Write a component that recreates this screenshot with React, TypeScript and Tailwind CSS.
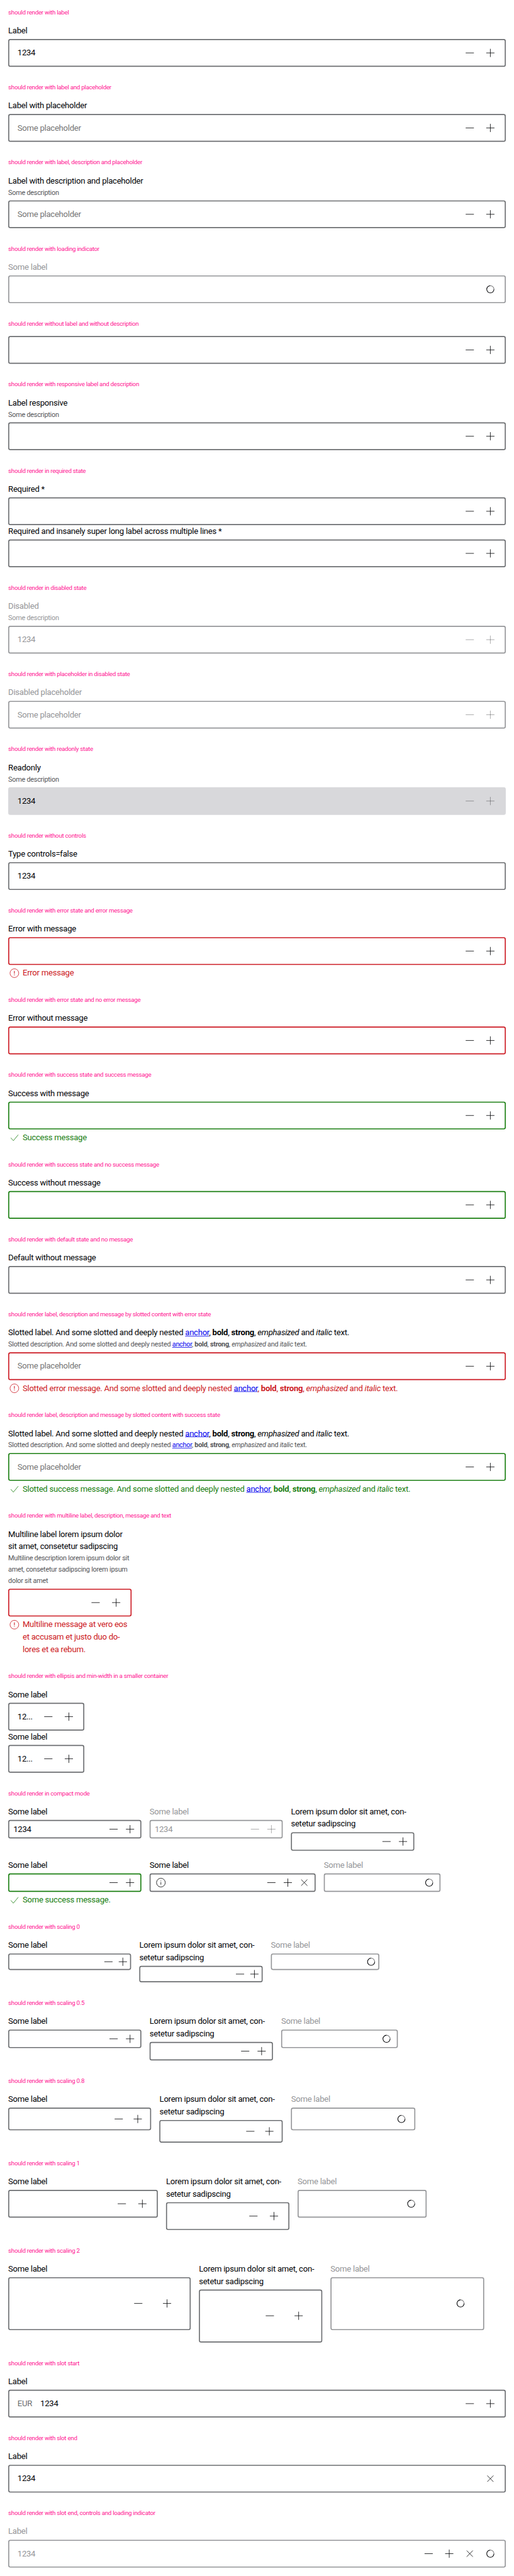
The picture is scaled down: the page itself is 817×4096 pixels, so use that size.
import { type ReactNode } from 'react';

type State = 'none' | 'error' | 'success';
type Icon = 'minus' | 'plus' | 'close' | 'spinner' | 'info';

const shapes: Record<Icon, ReactNode> = {
  minus: <path d="M4 12h16" />,
  plus: <path d="M4 12h16M12 4v16" />,
  close: <path d="M6 6l12 12M18 6L6 18" />,
  spinner: (
    <>
      <path d="M12 5a7 7 0 1 0 7 7" strokeWidth="1.3" />
      <path d="M12 5a7 7 0 0 1 7 7" strokeWidth="1.3" strokeOpacity="0.5" />
    </>
  ),
  info: (
    <>
      <circle cx="12" cy="12" r="8.5" />
      <path d="M12 11v5M12 8v1.2" />
    </>
  ),
};

function Glyph({ name, muted }: { name: Icon; muted?: boolean }) {
  return (
    <svg viewBox="0 0 24 24" className={`size-6 shrink-0 ${muted ? 'text-[#010205]/40' : 'text-[#010205]'}`} fill="none" stroke="currentColor" strokeWidth="1">
      {shapes[name]}
    </svg>
  );
}

const sizes = {
  s0: 'h-8 px-0.5 gap-1',
  s05: 'h-9 px-2 gap-2',
  s08: 'h-[43.6px] px-[12.8px] gap-[12.4px]',
  s1: 'h-[54px] px-4 gap-4',
  s2: 'h-[103.4px] px-8 gap-8',
};

interface FieldProps {
  label?: ReactNode;
  description?: ReactNode;
  message?: ReactNode;
  state?: State;
  value?: string;
  placeholder?: string;
  disabled?: boolean;
  readOnly?: boolean;
  start?: ReactNode;
  end?: Icon[];
  endMuted?: boolean;
  size?: keyof typeof sizes;
  className?: string;
}

function Field({ label, description, message, state = 'none', value, placeholder, disabled, readOnly, start, end = ['minus', 'plus'], endMuted, size = 's1', className = 'w-full' }: FieldProps) {
  const border = readOnly
    ? 'border-[#d8d8db] bg-[#d8d8db]'
    : state === 'error'
      ? 'border-[#cc1922]'
      : state === 'success'
        ? 'border-[#197e10]'
        : disabled
          ? 'border-[#949598]'
          : 'border-[#6b6d70]';
  const text = disabled ? 'text-[#949598]' : 'text-[#010205]';
  return (
    <div className={className}>
      {label && <div className={`text-base leading-6 tracking-[-0.3px] whitespace-nowrap ${text}`}>{label}</div>}
      {description && (
        <div className={`text-[13.3px] leading-[22px] tracking-[-0.31px] whitespace-nowrap ${disabled ? 'text-[#949598]' : 'text-[#535457]'}`}>{description}</div>
      )}
      <div className={`flex items-center rounded-sm border-2 ${label ? 'mt-1' : ''} ${sizes[size]} ${border}`}>
        {start}
        <div className={`min-w-0 flex-1 truncate text-base leading-6 tracking-[-0.3px] ${value ? text : disabled ? 'text-[#949598]' : 'text-[#757575]'}`}>{value ?? placeholder}</div>
        {end.map((name) => (
          <Glyph key={name} name={name} muted={endMuted} />
        ))}
      </div>
      {message && (
        <div className={`mt-1 flex gap-1 text-base leading-6 tracking-[-0.3px] whitespace-nowrap ${state === 'error' ? 'text-[#cc1922]' : 'text-[#197e10]'}`}>
          <svg viewBox="0 0 24 24" className="size-6 shrink-0" fill="none" stroke="currentColor" strokeWidth="1">
            {state === 'error' ? (
              <>
                <circle cx="12" cy="12" r="8.5" />
                <path d="M12 7.5v5.5M12 14.5v1.5" strokeWidth="1.3" />
              </>
            ) : (
              <path d="M5 12.500l5 5.500L19.500 6.500" />
            )}
          </svg>
          <div>{message}</div>
        </div>
      )}
    </div>
  );
}

function Section({ title, children }: { title: string; children: ReactNode }) {
  return (
    <section className="pb-4">
      <h2 className="h-12 py-4 text-xs leading-4 tracking-[-0.37px] whitespace-nowrap text-[#ff1493]">{title}</h2>
      {children}
    </section>
  );
}

function Slotted({ lead }: { lead: string }) {
  return (
    <>
      {lead}. And some slotted and deeply nested <a className="text-[#0000ee] underline">anchor</a>, <b>bold</b>, <strong>strong</strong>, <em>emphasized</em> and <i>italic</i> text.
    </>
  );
}

const lorem = (
  <>
    Lorem ipsum dolor sit amet, con-
    <br />
    setetur sadipscing
  </>
);

const scalings: { name: string; size: keyof typeof sizes; first: string; last: string }[] = [
  { name: '0', size: 's0', first: 'w-[239px]', last: 'w-[211px]' },
  { name: '0.5', size: 's05', first: 'w-[259px]', last: 'w-[227px]' },
  { name: '0.8', size: 's08', first: 'w-[278.400px]', last: 'w-[241.600px]' },
  { name: '1', size: 's1', first: 'w-[291px]', last: 'w-[251px]' },
  { name: '2', size: 's2', first: 'w-[355px]', last: 'w-[299px]' },
];

export default function App() {
  return (
    <div className="h-[4096px] w-[817px] overflow-hidden bg-white">
      <main className="h-[5013px] w-[1000px] origin-top-left scale-[0.817] px-4 font-['Roboto','Liberation_Sans',sans-serif]">
        <Section title="should render with label">
          <Field label="Label" value="1234" />
        </Section>
        <Section title="should render with label and placeholder">
          <Field label="Label with placeholder" placeholder="Some placeholder" />
        </Section>
        <Section title="should render with label, description and placeholder">
          <Field label="Label with description and placeholder" description="Some description" placeholder="Some placeholder" />
        </Section>
        <Section title="should render with loading indicator">
          <Field label="Some label" disabled end={['spinner']} />
        </Section>
        <Section title="should render without label and without description">
          <Field />
        </Section>
        <Section title="should render with responsive label and description">
          <Field label="Label responsive" description="Some description" />
        </Section>
        <Section title="should render in required state">
          <Field label="Required *" />
          <Field label="Required and insanely super long label across multiple lines *" />
        </Section>
        <Section title="should render in disabled state">
          <Field label="Disabled" description="Some description" value="1234" disabled endMuted />
        </Section>
        <Section title="should render with placeholder in disabled state">
          <Field label="Disabled placeholder" placeholder="Some placeholder" disabled endMuted />
        </Section>
        <Section title="should render with readonly state">
          <Field label="Readonly" description="Some description" value="1234" readOnly endMuted />
        </Section>
        <Section title="should render without controls">
          <Field label="Type controls=false" value="1234" end={[]} />
        </Section>
        <Section title="should render with error state and error message">
          <Field label="Error with message" state="error" message="Error message" />
        </Section>
        <Section title="should render with error state and no error message">
          <Field label="Error without message" state="error" />
        </Section>
        <Section title="should render with success state and success message">
          <Field label="Success with message" state="success" message="Success message" />
        </Section>
        <Section title="should render with success state and no success message">
          <Field label="Success without message" state="success" />
        </Section>
        <Section title="should render with default state and no message">
          <Field label="Default without message" />
        </Section>
        <Section title="should render label, description and message by slotted content with error state">
          <Field
            label={<Slotted lead="Slotted label" />}
            description={<Slotted lead="Slotted description" />}
            placeholder="Some placeholder"
            state="error"
            message={<Slotted lead="Slotted error message" />}
          />
        </Section>
        <Section title="should render label, description and message by slotted content with success state">
          <Field
            label={<Slotted lead="Slotted label" />}
            description={<Slotted lead="Slotted description" />}
            placeholder="Some placeholder"
            state="success"
            message={<Slotted lead="Slotted success message" />}
          />
        </Section>
        <Section title="should render with multiline label, description, message and text">
          <Field
            className="w-60"
            state="error"
            label={<>Multiline label lorem ipsum dolor<br />sit amet, consetetur sadipscing</>}
            description={<>Multiline description lorem ipsum dolor sit<br />amet, consetetur sadipscing lorem ipsum<br />dolor sit amet</>}
            message={<>Multiline message at vero eos<br />et accusam et justo duo do-<br />lores et ea rebum.</>}
          />
        </Section>
        <Section title="should render with ellipsis and min-width in a smaller container">
          <Field className="w-[148px]" label="Some label" value="12..." />
          <Field className="w-[148px]" label="Some label" value="12..." />
        </Section>
        <Section title="should render in compact mode">
          <div className="flex items-start gap-4">
            <Field className="w-[259px]" size="s05" label="Some label" value="1234" />
            <Field className="w-[259px]" size="s05" label="Some label" value="1234" disabled endMuted />
            <Field className="w-60" size="s05" label={lorem} />
          </div>
          <div className="mt-4 flex items-start gap-4">
            <Field className="w-[259px]" size="s05" label="Some label" state="success" message="Some success message." />
            <Field className="w-[323px]" size="s05" label="Some label" start={<Glyph name="info" />} end={['minus', 'plus', 'close']} />
            <Field className="w-[227px]" size="s05" label="Some label" disabled end={['spinner']} />
          </div>
        </Section>
        {scalings.map(({ name, size, first, last }) => (
          <Section key={name} title={`should render with scaling ${name}`}>
            <div className="flex items-start gap-4">
              <Field className={first} size={size} label="Some label" />
              <Field className="w-60" size={size} label={lorem} />
              <Field className={last} size={size} label="Some label" disabled end={['spinner']} />
            </div>
          </Section>
        ))}
        <Section title="should render with slot start">
          <Field label="Label" value="1234" start={<span className="text-base leading-6 tracking-[-0.3px] text-[#6b6d70]">EUR</span>} />
        </Section>
        <Section title="should render with slot end">
          <Field label="Label" value="1234" end={['close']} />
        </Section>
        <Section title="should render with slot end, controls and loading indicator">
          <Field label="Label" value="1234" disabled end={['minus', 'plus', 'close', 'spinner']} />
        </Section>
      </main>
    </div>
  );
}
